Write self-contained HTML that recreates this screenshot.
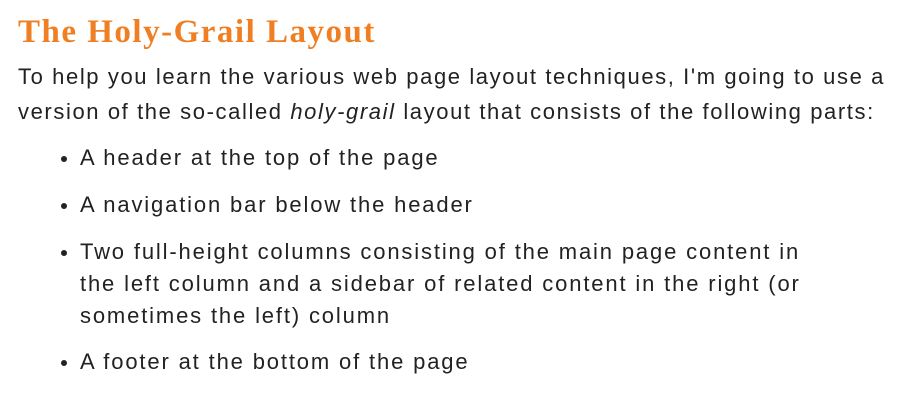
<!DOCTYPE html>
<html><head><style>
body{margin:0;background:#fff;width:898px;height:401px;overflow:hidden;font-family:"Liberation Sans",sans-serif;color:#222;}
h1{position:absolute;left:18px;top:14px;margin:0;font-family:"Liberation Serif",serif;font-weight:bold;font-size:33px;color:#f07f23;white-space:nowrap;letter-spacing:1.5px}
p{position:absolute;left:18px;top:59px;margin:0;font-size:22px;line-height:35px;white-space:nowrap;letter-spacing:1.6px}
.li{position:absolute;left:80px;font-size:22px;line-height:32px;white-space:nowrap;letter-spacing:1.85px}
.li:before{content:"";position:absolute;left:-19px;top:14px;width:6px;height:6px;border-radius:50%;background:#222}
</style></head><body>
<h1>The Holy-Grail Layout</h1>
<p>To help you learn the various web page layout techniques, I'm going to use a<br>version of the so-called <i>holy-grail</i> layout that consists of the following parts:</p>
<div class="li" style="top:142px">A header at the top of the page</div>
<div class="li" style="top:189px">A navigation bar below the header</div>
<div class="li" style="top:236px">Two full-height columns consisting of the main page content in<br>the left column and a sidebar of related content in the right (or<br>sometimes the left) column</div>
<div class="li" style="top:346px">A footer at the bottom of the page</div>
</body></html>
